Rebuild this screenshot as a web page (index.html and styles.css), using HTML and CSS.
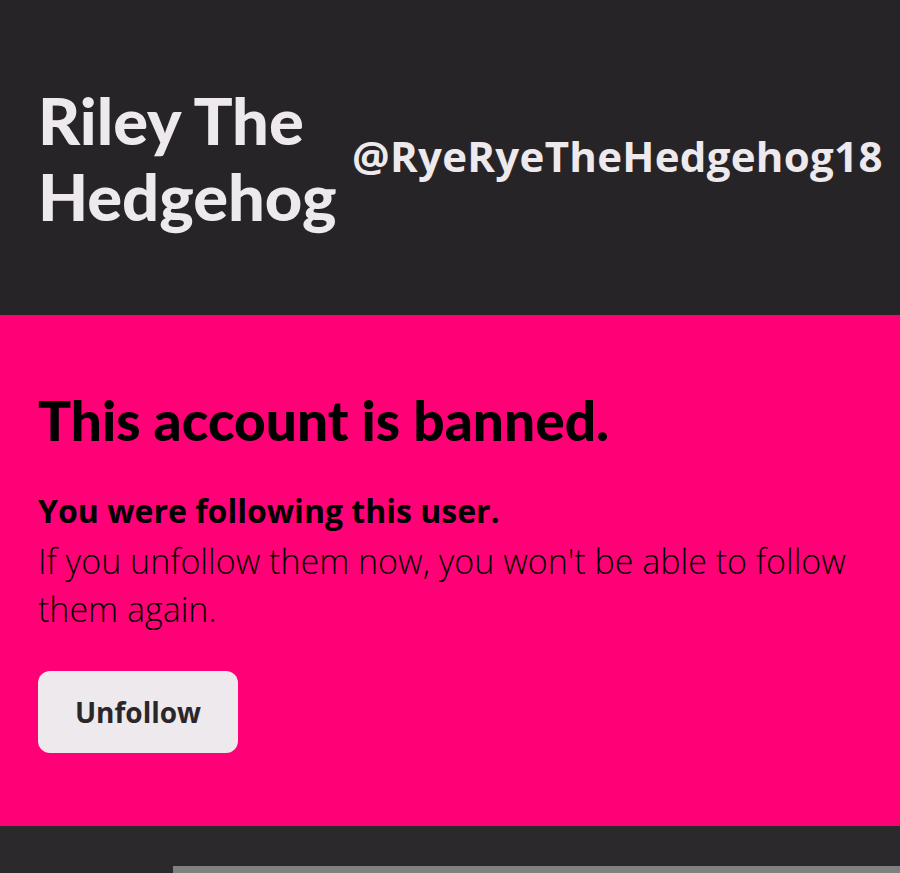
FILE: index.html
```html
<!DOCTYPE html>
<html lang="en">
<head>
  <meta charset="UTF-8">
  <meta name="viewport" content="width=device-width, initial-scale=1.0">
  <title>Riley The Hedgehog</title>
  <link rel="stylesheet" href="styles.css">
</head>
<body>
  <header id="profile">
    <h1 class="name">Riley The Hedgehog</h1>
    <div class="handle">@RyeRyeTheHedgehog18</div>
  </header>
  <section id="banned">
    <h2 class="title">This account is banned.</h2>
    <p class="lead">You were following this user.</p>
    <p class="note">If you unfollow them now, you won't be able to follow them again.</p>
    <button class="btn">Unfollow</button>
  </section>
  <footer id="bottom">
    <div class="bar"></div>
  </footer>
</body>
</html>
```

FILE: styles.css
```css
html,
body {
  padding: 0;
  margin: 0;
  background-color: #2b292c;
  font-family: 'Open Sans', 'Noto Sans', sans-serif;
}
#profile {
  display: flex;
  align-items: center;
  height: 315px;
  padding: 0 10px 0 38px;
  box-sizing: border-box;
  background: #262427;
  color: #ede9ec;
}
#profile .name {
  width: 300px;
  margin: 0;
  font-family: 'Lato', sans-serif;
  font-size: 65px;
  font-weight: 900;
  line-height: 76px;
}
#profile .handle {
  margin: 0 0 4px 14px;
  font-size: 42px;
  font-weight: 700;
  letter-spacing: 0.3px;
  white-space: nowrap;
}
#banned {
  height: 511px;
  padding: 75px 38px 0;
  box-sizing: border-box;
  background: #ff0077;
  color: #000;
}
#banned .title {
  margin: 0;
  font-family: 'Lato', sans-serif;
  font-size: 55px;
  font-weight: 900;
  line-height: 60px;
}
#banned .lead {
  margin: 40px 0 0;
  font-size: 32px;
  font-weight: 700;
  line-height: 42px;
}
#banned .note {
  margin: 5px 0 0;
  font-size: 34px;
  font-weight: 300;
  line-height: 48px;
}
#banned .btn {
  width: 200px;
  height: 82px;
  margin-top: 38px;
  border: none;
  border-radius: 12px;
  background: #ede9ec;
  color: #2a2629;
  font-family: inherit;
  font-size: 28px;
  font-weight: 700;
}
#bottom {
  height: 47px;
  display: flex;
  align-items: flex-end;
  background: #2b292c;
}
#bottom .bar {
  height: 7px;
  margin-left: 173px;
  flex: 1;
  background: #808080;
}
```
